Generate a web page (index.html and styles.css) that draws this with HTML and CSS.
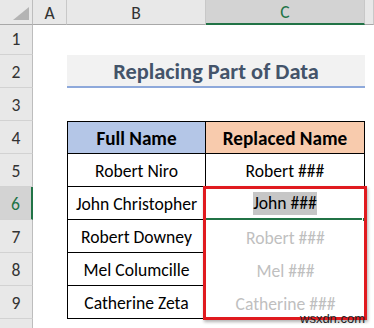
FILE: index.html
```html
<!DOCTYPE html>
<html>
<head>
<meta charset="utf-8">
<link rel="stylesheet" href="styles.css">
</head>
<body>
<div class="sheet">
  <div class="row head">
    <div class="corner"><span class="tri"></span></div>
    <div class="ch">A</div>
    <div class="ch">B</div>
    <div class="ch sel">C</div>
    <div class="ch"></div>
  </div>
  <div class="row">
    <div class="rh">1</div><div></div><div></div><div></div><div></div>
  </div>
  <div class="row">
    <div class="rh">2</div><div></div><div class="title">Replacing Part of Data</div><div></div>
  </div>
  <div class="row">
    <div class="rh">3</div><div></div><div></div><div></div><div></div>
  </div>
  <div class="row">
    <div class="rh">4</div><div></div>
    <div class="td th tb">Full Name</div>
    <div class="td th tc">Replaced Name</div>
    <div></div>
  </div>
  <div class="row">
    <div class="rh">5</div><div></div>
    <div class="td tb">Robert Niro</div>
    <div class="td">Robert ###</div>
    <div></div>
  </div>
  <div class="row">
    <div class="rh sel">6</div><div></div>
    <div class="td tb">John Christopher</div>
    <div class="td active"><span class="hl">John ###</span><span class="handle"></span></div>
    <div></div>
  </div>
  <div class="row">
    <div class="rh">7</div><div></div>
    <div class="td tb">Robert Downey</div>
    <div class="td ghost">Robert ###</div>
    <div></div>
  </div>
  <div class="row">
    <div class="rh">8</div><div></div>
    <div class="td tb">Mel Columcille</div>
    <div class="td ghost">Mel ###</div>
    <div></div>
  </div>
  <div class="row">
    <div class="rh">9</div><div></div>
    <div class="td tb">Catherine Zeta</div>
    <div class="td ghost">Catherine ###</div>
    <div></div>
  </div>
  <div class="row">
    <div class="rh"></div><div></div><div></div><div></div><div></div>
  </div>
  <div class="redbox"></div>
  <div class="mark">wsxdn.com</div>
</div>
</body>
</html>
```
FILE: styles.css
```css
* { box-sizing: border-box; }
html, body { margin: 0; padding: 0; background: #fff; }
.sheet {
  position: relative;
  width: 374px;
  height: 328px;
  overflow: hidden;
  display: flex;
  flex-direction: column;
  font-family: Carlito, "Open Sans", sans-serif;
  font-size: 17.6px;
  color: #000;
}
.row {
  display: grid;
  grid-template-columns: 33px 34px 139px 159px 9px;
  height: 33px;
  flex: none;
}
.row.head { height: 22px; }
.corner {
  background: #e8e8e8;
  border-right: 1px solid #bdbdbd;
  border-bottom: 1px solid #a8a8a8;
  position: relative;
}
.tri {
  position: absolute;
  right: 3px;
  bottom: 4px;
  width: 16px;
  height: 13px;
  background: #b4b4b4;
  clip-path: polygon(100% 0, 100% 100%, 0 100%);
}
.ch {
  background: #e8e8e8;
  border-right: 1px solid #c8c8c8;
  border-bottom: 1px solid #a8a8a8;
  display: flex;
  align-items: center;
  justify-content: center;
  color: #333;
  font-size: 17.6px;
  padding-top: 1px;
}
.ch.sel {
  background: #d3d3d3;
  color: #217346;
  border-bottom: 2px solid #217346;
}
.rh {
  background: #e8e8e8;
  border-right: 1px solid #bdbdbd;
  border-bottom: 1px solid #d2d2d2;
  display: flex;
  align-items: center;
  justify-content: center;
  color: #333;
  font-size: 17.6px;
  padding-top: 2px;
}
.rh.sel {
  background: #d3d3d3;
  color: #217346;
  border-right: 2px solid #217346;
}
.title {
  grid-column: span 2;
  background: #f2f2f2;
  border-bottom: 2px solid #8ea9db;
  color: #44546a;
  font-weight: bold;
  font-size: 22.4px;
  display: flex;
  align-items: center;
  justify-content: center;
  padding-top: 2px;
}
.td {
  border-right: 1px solid #000;
  border-bottom: 1px solid #000;
  display: flex;
  align-items: center;
  justify-content: center;
  padding-top: 2px;
  position: relative;
  line-height: 20px;
}
.td.tb { border-left: 1px solid #000; }
.td.th { border-top: 1px solid #000; font-weight: bold; font-size: 19.2px; }
.td.th.tb { background: #b4c6e7; }
.td.th.tc { background: #f8cbad; }
.td.active { border-bottom: 2px solid #217346; }
.hl { background: #c6c6c6; padding: 0; line-height: 23px; }
.handle {
  position: absolute;
  right: -3px;
  bottom: -4px;
  width: 5px;
  height: 5px;
  background: #217346;
  border: 1px solid #fff;
}
.td.ghost { color: #bfbfbf; border-bottom: none; border-right: none; }
.redbox {
  position: absolute;
  left: 203px;
  top: 186px;
  width: 164px;
  height: 134px;
  border: 3px solid #e01a1f;
  box-shadow: 1px 2px 3px rgba(0,0,0,0.3);
}
.mark {
  position: absolute;
  left: 300px;
  top: 313px;
  font-family: "Liberation Sans", sans-serif;
  font-size: 13px;
  line-height: 12px;
  color: #222;
}
```
